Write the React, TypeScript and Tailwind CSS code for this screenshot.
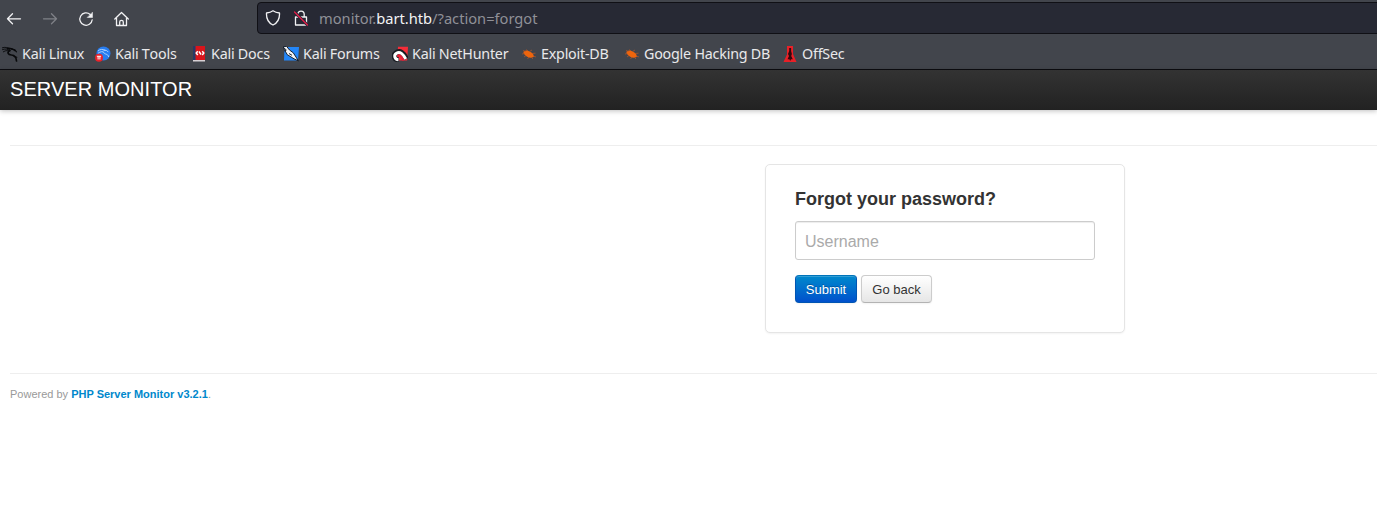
import type { ReactNode } from "react";

const Dragon = () => (
  <svg width="16" height="16" viewBox="0 0 16 16" fill="none" stroke="#08090b" strokeLinecap="round">
    <path d="M.3 1.800C3 .8 5.500 1.300 8 3.300M.5 3.600C3 2.600 6 2.800 8.500 4.600M1.300 5.800C4 4 6.500 4.300 8 5.500" strokeWidth=".9" />
    <path d="M5.500 2.300c3-.3 5.500.2 7.500 2.200M7.500 4.300C4.800 6.500 6 8.600 9.500 9c3.500.3 4.800 2 5 6" strokeWidth="1.700" />
    <path d="m9.500 3.300 3.300.5 1.700 2M12 10.500l2.800.8" strokeWidth="1.100" />
  </svg>
);
const Tools = () => (
  <svg width="16" height="16" viewBox="0 0 16 16">
    <circle cx="8.500" cy="7.500" r="7" fill="#277cf0" />
    <path d="M3 5c2-2 5-2 7.500-.5M3 7.300C5.500 5.500 8 5 9 6.600c0 2 4 .6 4.700 4.400M8.500 4.300c2.200-.4 3.700.2 4.700 1.800" fill="none" stroke="#b9daff" strokeWidth=".9" />
    <circle cx="4" cy="11.700" r="4" fill="#e9232b" />
    <path d="M1.900 10.300h4.200M3.100 10.500v3M4.900 10.500v3" stroke="#fff" />
  </svg>
);
const Docs = () => (
  <svg width="16" height="16" viewBox="0 0 16 16">
    <path d="M2 0h12v15H2z" fill="#d9151b" />
    <path d="M2 0h2.500v14H2z" fill="#273a67" />
    <path d="M2 14h12v1.500H2z" fill="#d7d0d4" />
    <path d="M6.800 5.300 5.200 7l1.600 2M11.200 5.300 12.800 7l-1.600 2M8 5.500l2 3" fill="none" stroke="#fff" strokeWidth="1.500" />
  </svg>
);
const Forums = () => (
  <svg width="16" height="16" viewBox="0 0 16 16">
    <path d="M1.500 1H16l-1 13.500H1z" fill="#2386f8" />
    <path d="M0 .8 3.500.3 6.500 4l3.800 2.800L15.500 15 11 12.800 4.300 8.700 1.500 4z" fill="#f4f5f7" stroke="#17202d" strokeWidth="1" />
    <path d="m0 1 3.300 3L1.500 5M6 7.500l3 1.800" stroke="#17202d" fill="none" />
  </svg>
);
const NetHunter = () => (
  <svg width="16" height="16" viewBox="0 0 16 16">
    <path d="M6 .8h10l-.8 13.700H5z" fill="#f52d38" />
    <path d="M7 14C2 14 .5 9 4 6.800c4-3 7.500 0 10.500 6" fill="none" stroke="#191c23" strokeWidth="5" />
    <path d="M6.500 13.700C2.500 13.500 1.500 9 4.500 7.200 8 5 11 8 13.700 13" fill="none" stroke="#fff" strokeWidth="3" />
    <path d="M5.500 10.500c2-2.500 4 0 6 4" fill="none" stroke="#e51d37" strokeWidth="2" />
  </svg>
);
const Bug = () => (
  <svg width="16" height="16" viewBox="0 0 16 16">
    <path d="M2.300 6C4 4.500 5.500 4.200 7.500 4.900c2.500.8 3.600 1.800 4.800 3.500l.7 2.300-2.500 1C7.500 12.200 4.500 10 3 8z" fill="#ee650d" />
    <path d="m4.500 5.500-2.500-1M6.500 5 5.500 3.500M8.500 5.500 11 4M11 7.500l3.500-.3M3.500 7.500 1 8M5 9.500l-2 1.500M8 11l-1.500 2M12 10l3 1M10 11l2 2" stroke="#b85626" strokeWidth=".7" />
  </svg>
);
const OffSec = () => (
  <svg width="16" height="16" viewBox="0 0 16 16">
    <path d="M5 0h6v8l3.500 8H1.500L5 8.500z" fill="#e92027" />
    <path d="M7.200 2h1.900v3l.8 3-.7 2 1.600 3.200H9L8.200 15l-.8-1.800H5.500L7 10l-1-2 1.200-3z" fill="#310a0e" />
  </svg>
);

function Bookmark({ icon, label, width }: { icon: ReactNode; label: string; width: string }) {
  return (
    <a className={`flex shrink-0 items-center gap-1 whitespace-nowrap ${width}`}>
      {icon}
      <span>{label}</span>
    </a>
  );
}

const stroke = { fill: "none", stroke: "#f2f2f4", strokeWidth: 1.3, strokeLinecap: "round", strokeLinejoin: "round" } as const;

export default function App() {
  return (
    <div className="h-[532px] w-full overflow-hidden bg-white font-['Liberation_Sans',Arial,sans-serif] text-[13px] leading-5 text-[#333]">
      <div className="h-[70px] border-b border-[#0c0c11] bg-[#42454c] font-['Noto_Sans',sans-serif] text-[#e9e9eb]">
        <div className="flex h-[38px] items-start pl-1.5 pt-[2px]">
          <div className="flex w-[251px] shrink-0 items-center gap-5 pt-[9px]">
            <svg width="16" height="16" viewBox="0 0 16 16" {...stroke}><path d="M6.500 2.800 1.500 7.800l5 5M1.500 7.800h13" /></svg>
            <svg width="16" height="16" viewBox="0 0 16 16" {...stroke} stroke="#7f8187"><path d="m9.500 2.800 5 5-5 5M1.500 7.800h13" /></svg>
            <svg width="16" height="16" viewBox="0 0 16 16" {...stroke}><path d="M12.200 3.500A6.200 6.200 0 1 0 14.200 8.800" /><path d="M14.500 1.500v5h-5z" fill="#f2f2f4" strokeWidth=".5" /></svg>
            <svg width="16" height="16" viewBox="0 0 16 16" {...stroke}><path d="m.8 8 6.700-6.500L14.300 8M2.500 7v7.500h10V7M5.700 14.500V11q0-1.700 1.800-1.700T9.300 11v3.500" /></svg>
          </div>
          <div className="flex h-8 w-[1130px] shrink-0 items-center rounded-l border border-[#101015] bg-[#272934] pl-[7px] text-[14.670px]">
            <svg width="16" height="16" viewBox="0 0 16 16" {...stroke}><path d="M8 .8C6 2.300 4 2.800 1.500 3c-.3 5.500 1 9.500 6.500 12 5.500-2.500 6.800-6.500 6.500-12C12 2.800 10 2.300 8 .8Z" /></svg>
            <svg className="ml-3" width="16" height="16" viewBox="0 0 16 16" {...stroke}><path d="M2.500 7h11v8h-11zM4.800 7V4.300a3.200 3.200 0 0 1 6.400 0V7" /><path d="m2 2.500 12.500 12.500" stroke="#272934" strokeWidth="3" /><path d="m1.500 2 13 13" stroke="#e51c49" /></svg>
            <span className="ml-2.5 whitespace-pre text-[#8f9097]">monitor.<span className="text-[#f4f4f5]">bart.htb</span>/?action=forgot</span>
          </div>
        </div>
        <nav className="flex h-[31px] items-center pl-0.5 text-[14.300px] tracking-[-0.22px] [font-kerning:none]">
          <Bookmark icon={<Dragon />} label="Kali Linux" width="w-[93px]" />
          <Bookmark icon={<Tools />} label="Kali Tools" width="w-24" />
          <Bookmark icon={<Docs />} label="Kali Docs" width="w-[92px]" />
          <Bookmark icon={<Forums />} label="Kali Forums" width="w-[109px]" />
          <Bookmark icon={<NetHunter />} label="Kali NetHunter" width="w-[129px]" />
          <Bookmark icon={<Bug />} label="Exploit-DB" width="w-[103px]" />
          <Bookmark icon={<Bug />} label="Google Hacking DB" width="w-[158px]" />
          <Bookmark icon={<OffSec />} label="OffSec" width="w-20" />
        </nav>
      </div>
      <header className="relative flex h-10 items-center bg-linear-to-b from-[#333] to-[#222] pl-2.5 text-xl text-white shadow-[0_1px_5px_rgba(0,0,0,0.25)]">
        <span className="-mt-0.5 tracking-[0.05px]">SERVER MONITOR</span>
      </header>
      <main className="ml-2.5 mt-[35px] border-t border-[#eee] pt-[18px]">
        <form className="ml-[755px] h-[169px] w-[360px] rounded-[5px] border border-[#e5e5e5] bg-white px-[29px] pt-6 shadow-[0_1px_2px_rgba(0,0,0,0.05)]">
          <h1 className="text-[18px] font-bold leading-5">Forgot your password?</h1>
          <input className="mt-3 block h-[39px] w-[300px] rounded-[3px] border border-[#ccc] px-[9px] pt-0.5 text-base shadow-[inset_0_1px_1px_rgba(0,0,0,0.075)] outline-none placeholder:text-[#aaa]" placeholder="Username" />
          <div className="mt-[15px] flex gap-1">
            <button type="button" className="h-7 w-[62px] rounded-[4px] border border-[#0055b3] border-t-[#0074ba] bg-linear-to-b from-[#0088cc] to-[#0050cc] pt-0.5 text-white shadow-[inset_0_1px_0_rgba(255,255,255,0.2),0_1px_2px_rgba(0,0,0,0.05)] text-shadow-[0_-1px_0_rgba(0,0,0,0.25)]">Submit</button>
            <button type="button" className="h-7 w-[71px] rounded-[4px] border border-[#ccc] border-b-[#b3b3b3] bg-linear-to-b from-white to-[#e6e6e6] pt-0.5 shadow-[inset_0_1px_0_rgba(255,255,255,0.2),0_1px_2px_rgba(0,0,0,0.05)]">Go back</button>
          </div>
        </form>
      </main>
      <footer className="ml-2.5 mt-10 border-t border-[#eee] pt-2.5 text-[11px] text-[#999]">
        Powered by <a className="font-bold text-[#0088cc]">PHP Server Monitor v3.2.1</a>.
      </footer>
    </div>
  );
}
